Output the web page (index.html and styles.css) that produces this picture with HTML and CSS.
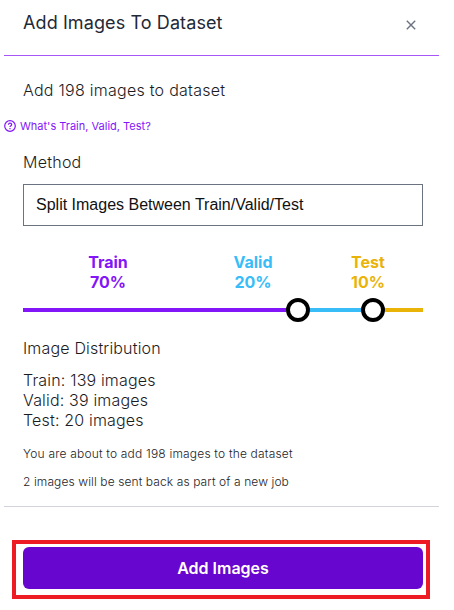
FILE: index.html
```html
<!DOCTYPE html>
<html lang="en">
<head>
<meta charset="utf-8">
<title>Add Images To Dataset</title>
<link rel="stylesheet" href="styles.css">
</head>
<body>
<main class="dialog">
  <header class="header">
    <h1 class="title"><span>Add Images To Dataset</span></h1>
    <button class="close" aria-label="Close"><svg width="10" height="10" viewBox="0 0 10 10"><path d="M.8.8l8.4 8.4M9.2.8L.8 9.2"/></svg></button>
  </header>
  <section class="body">
    <p class="summary"><span>Add 198 images to dataset</span></p>
    <a class="help"><svg width="12" height="12" viewBox="0 0 12 12"><circle cx="6" cy="6" r="5.3"/><path d="M4.4 4.8C4.4 3.7 5.1 3.2 6 3.2s1.7.6 1.7 1.5C7.7 5.8 6 5.8 6 7.1M6 8.1v1.2"/></svg><span>What's Train, Valid, Test?</span></a>
    <p class="label"><span>Method</span></p>
    <div class="select"><span>Split Images Between Train/Valid/Test</span></div>
    <div class="split-labels">
      <div class="split train"><span>Train</span><br><span>70%</span></div>
      <div class="split valid"><span>Valid</span><br><span>20%</span></div>
      <div class="split test"><span>Test</span><br><span>10%</span></div>
    </div>
    <div class="slider">
      <div class="track track-train"></div>
      <div class="handle"></div>
      <div class="track track-valid"></div>
      <div class="handle"></div>
      <div class="track track-test"></div>
    </div>
    <p class="distribution"><span>Image Distribution</span></p>
    <div class="counts"><span>Train: 139 images</span><br><span>Valid: 39 images</span><br><span>Test: 20 images</span></div>
    <p class="note note-total"><span>You are about to add 198 images to the dataset</span></p>
    <p class="note"><span>2 images will be sent back as part of a new job</span></p>
  </section>
  <footer class="footer">
    <div class="highlight"><button class="submit"><span>Add Images</span></button></div>
  </footer>
</main>
</body>
</html>
```
FILE: styles.css
```css
* { box-sizing: border-box; }
body { margin: 0; background: #fff; color: #1c1c1f; font: 300 16px/20px Inter, sans-serif; }
h1, p { margin: 0; font-weight: inherit; }
button { border: 0; padding: 0; background: none; font: inherit; }
.dialog { width: 435px; height: 610px; margin-left: 4px; }
.header { display: flex; justify-content: space-between; height: 56px; padding: 9px 23px 0 19px; border-bottom: 1px solid #a855f7; }
.title { font-size: 18px; line-height: 28px; font-weight: 400; letter-spacing: .1px; color: #1f2937; }
.close { display: flex; height: 10px; margin-top: 11px; }
.close svg { fill: none; stroke: #6b7280; stroke-width: 1.4; }
.body { height: 451px; padding: 24px 16px 0 19px; border-bottom: 1px solid #d1d5db; }
.summary { height: 40px; line-height: 20px; letter-spacing: .26px; }
.help { display: flex; align-items: center; gap: 4px; height: 12px; margin-left: -19px; font-size: 11px; font-weight: 400; color: #8315f9; }
.help svg { fill: none; stroke: #8315f9; stroke-width: 1.2; }
.label { margin-top: 20px; height: 32px; letter-spacing: .25px; }
.select { display: flex; align-items: center; height: 42px; padding: 0 12px; border: 1px solid #6b7280; font: 16px/20px "Liberation Sans", sans-serif; color: #111; }
.split-labels { display: grid; grid-template-columns: 170px 120px 110px; margin-top: 26px; font-weight: 700; text-align: center; }
.train { color: #8315f9; }
.valid { color: #38bdf8; }
.test { color: #eab308; }
.slider { display: flex; align-items: center; height: 24px; margin-top: 6px; }
.track { height: 4px; }
.track-train { width: 263px; background: #8315f9; }
.track-valid { width: 51px; background: #38bdf8; }
.track-test { width: 38px; background: #eab308; }
.handle { width: 24px; height: 24px; border: 4px solid #000; border-radius: 50%; background: #fff; }
.distribution { margin-top: 16px; letter-spacing: .17px; }
.counts { margin-top: 12px; letter-spacing: .17px; }
.note { margin-top: 14px; font-size: 12px; line-height: 14px; letter-spacing: .1px; }
.note-total { margin-top: 17px; letter-spacing: .19px; }
.footer { padding: 33px 9px 0 8px; }
.highlight { height: 59px; padding: 3px 3px 0 7px; border: 4px solid #ed1c24; }
.submit { width: 400px; height: 42px; border-radius: 6px; background: #6706ce; color: #fff; font-weight: 600; }
```
